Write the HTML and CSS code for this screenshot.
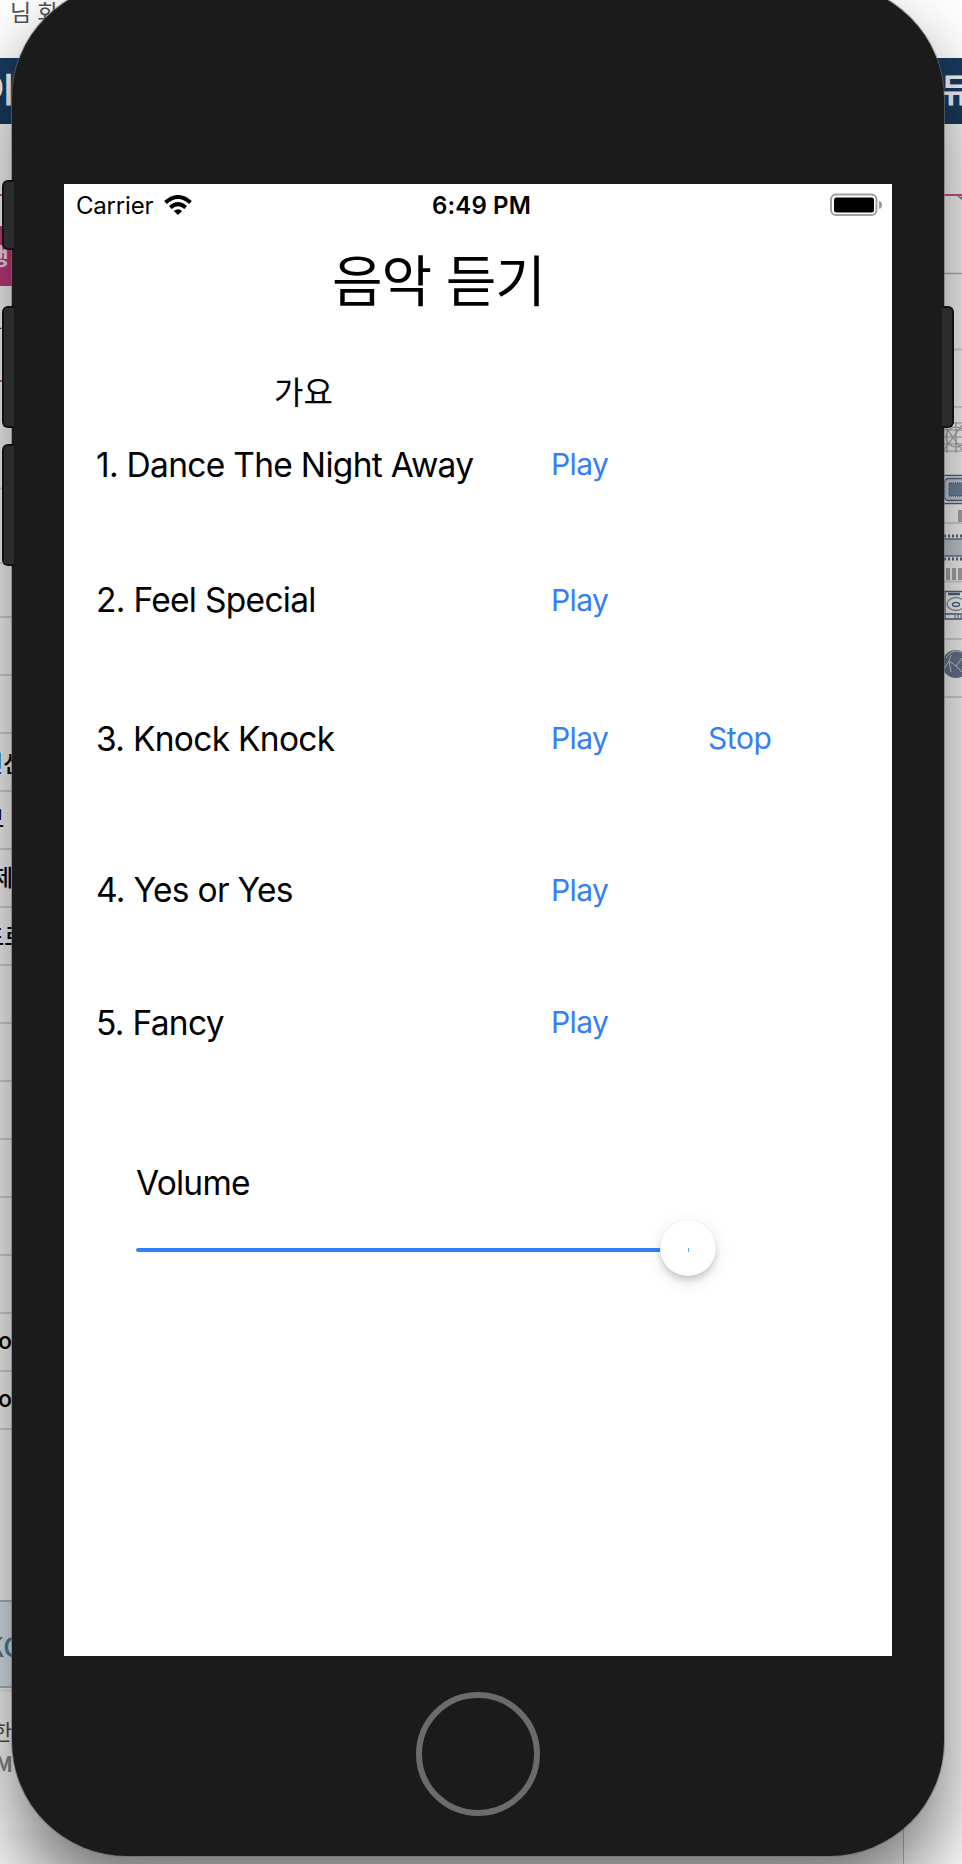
FILE: index.html
```html
<!DOCTYPE html>
<html lang="ko">
<head>
<meta charset="utf-8">
<title>음악 듣기</title>
<link rel="stylesheet" href="styles.css">
</head>
<body>
<div class="desktop">
  <svg class="backdrop" viewBox="0 0 962 1864" width="962" height="1864" aria-hidden="true">
    <rect width="962" height="1864" fill="#fff"/>
    <rect y="58" width="962" height="66" fill="#193a5f"/>
    <rect y="124" width="962" height="1740" fill="#fbfbfb"/>
    <g class="bd-text">
      <text x="10" y="21" font-size="23" fill="#555">님 화</text>
      <text x="-16" y="102" font-size="33" font-weight="700" fill="#f2f5f8">이</text>
      <text x="941" y="102" font-size="33" font-weight="700" fill="#f2f5f8">뮤</text>
    </g>
    <rect y="194" width="962" height="2" fill="#d84c8f"/>
    <rect y="226" width="12" height="60" fill="#c23a7e"/>
    <g class="bd-text">
      <text x="-13" y="265" font-size="24" font-weight="700" fill="#f3dbe8">행</text>
      <text x="-16" y="337" font-size="20" fill="#444">급</text>
    </g>
    <rect y="380" width="12" height="2" fill="#d84c8f"/>
    <path class="rule" d="M0 488.500H12M0 563H12M0 617H12M0 675H12M0 733H12M0 791H12M0 849H12M0 907H12M0 965H12M0 1023H12M0 1081H12M0 1139H12M0 1197H12M0 1255H12M0 1313H12M0 1371H12M0 1429H12"/>
    <g class="bd-text" font-size="23" font-weight="500">
      <text x="-18" y="772"><tspan fill="#0755c5">던</tspan>산</text>
      <text x="-17" y="827">보</text>
      <text x="-8" y="886">제</text>
      <text x="-17" y="945">드로</text>
      <text x="-2" y="1349">o</text>
      <text x="-2" y="1407">o</text>
    </g>
    <rect x="0" y="1601" width="12" height="86" fill="#dce9ef"/>
    <path d="M0 1601H12M0 1687H12" stroke="#a3bac2" stroke-width="2"/>
    <path d="M0 1690.500H12" stroke="#dce9ef" stroke-width="2"/>
    <g class="bd-text">
      <text x="-14" y="1657" font-size="27" font-weight="500" fill="#5d7c96">KO</text>
      <text x="-8" y="1740" font-size="22" fill="#555">한</text>
      <text x="-5" y="1772" font-size="21" font-weight="700" fill="#888">M</text>
    </g>
    <path class="rule-dark" d="M944 273.500H962"/>
    <path class="rule" d="M944 349.500H962M944 407H962M944 523H962M944 581.500H962M944 639H962M944 697H962"/>
    <path d="M957 196L962 200V197Z" fill="#777"/>
    <g class="mesh"><path d="M944 423H962M944 430H962M944 437H962M944 444H962M944 451H962M947 422V453M956 422V453M944 425L962 450M944 450L962 425"/><circle cx="956" cy="437" r="10"/></g>
    <g fill="none" stroke="#526684" stroke-width="1.300">
      <path d="M944 475.500H962M944 503.500H962"/>
      <rect x="944.500" y="478.500" width="28" height="22" rx="4" fill="#c6d0df"/>
      <rect x="949" y="483" width="22" height="13" fill="#7486a0" stroke-dasharray="1 1"/>
      <rect x="940" y="539" width="30" height="17" fill="#c7ccd5"/>
      <path d="M944 536H962M944 559H962" stroke-width="3" stroke-dasharray="2 2"/>
      <path d="M944 591.500H962M944 614H962M944 619H962M945 592V619"/>
      <path d="M948 594H960" stroke-width="2.500"/>
      <ellipse cx="956" cy="604" rx="9" ry="6.500" stroke="#8796aa"/><ellipse cx="956" cy="604.500" rx="3.500" ry="2"/>
      <path d="M955 615V619M958 615V619M961 615V619" stroke-width="1"/>
    </g>
    <path d="M958 510h4v12h-4zM946 568h4v12h-4zM952 568h4v12h-4zM958 568h4v12h-4z" fill="#aaa"/>
    <circle cx="956" cy="664" r="14" fill="#68778d"/>
    <path d="M944 669L949 661L956 666L962 658M951 655L949 661L951 672M956 666L962 672M946 658Q952 648 962 652" stroke="#ccd3dc" fill="none"/>
    <rect x="0" y="1830" width="904" height="34" fill="#f7f7f7"/>
    <path d="M903.500 1820V1864" stroke="#bbb"/>
  </svg>

  <div class="phone">
    <i class="key key-mute"></i><i class="key key-up"></i><i class="key key-down"></i><i class="key key-power"></i>
    <main class="screen">
      <header class="status">
        <div class="carrier"><span>Carrier</span>
          <svg class="wifi" viewBox="0 0 28 20" width="28" height="20"><g fill="none" stroke="#000" stroke-width="4"><path d="M1.500 7.600Q14-3.600 26.500 7.600"/><path d="M6.300 12.400Q14 5.700 21.700 12.400"/></g><path d="M9.800 16Q14 12.400 18.200 16L14 20Z"/></svg>
        </div>
        <time class="clock">6:49 PM</time>
        <svg class="battery" viewBox="0 0 52 24" width="52" height="24"><rect x="1" y="1.500" width="45.500" height="20.500" rx="5" fill="none" stroke="#a0a0a0" stroke-width="2"/><rect x="4" y="4.500" width="40" height="15" rx="2.500"/><path d="M49 8Q52 8.500 52 12T49 16Z" fill="#999"/></svg>
      </header>
      <h1 class="title">음악 듣기</h1>
      <h2 class="genre">가요</h2>
      <ol class="songs">
        <li class="song s1"><span class="name">1. Dance The Night Away</span><button class="play">Play</button></li>
        <li class="song s2"><span class="name">2. Feel Special</span><button class="play">Play</button></li>
        <li class="song s3"><span class="name">3. Knock Knock</span><button class="play">Play</button><button class="stop">Stop</button></li>
        <li class="song s4"><span class="name">4. Yes or Yes</span><button class="play">Play</button></li>
        <li class="song s5"><span class="name">5. Fancy</span><button class="play">Play</button></li>
      </ol>
      <section class="volume">
        <span class="volume-label">Volume</span>
        <div class="slider"><div class="track"></div><div class="thumb"><i class="tick"></i></div></div>
      </section>
    </main>
    <div class="home"></div>
  </div>
</div>
</body>
</html>
```
FILE: styles.css
```css
* { box-sizing: border-box; margin: 0; padding: 0; }
body { font-family: Inter, "Noto Sans CJK KR", sans-serif; color: #000; }
.desktop { display: flex; align-items: flex-start; position: relative; width: 962px; height: 1864px; overflow: hidden; background: #fff; }
.backdrop { position: absolute; left: 0; top: 0; }
.bd-text { font-family: "Noto Sans CJK KR", sans-serif; }
.rule { stroke: #d7d7dc; stroke-width: 2; }
.rule-dark { stroke: #b4b4b4; stroke-width: 1.5; }
.mesh { fill: none; stroke: #a5a5a5; stroke-width: 1.2; }

.phone {
  position: relative;
  width: 932px; height: 1872px;
  margin: -16px 0 0 12px;
  padding: 200px 52px 0;
  background: #1b1b1b;
  border-radius: 115px;
  box-shadow: 0 0 0 1px rgba(110, 110, 110, .6), 0 42px 76px rgba(0, 0, 0, .54);
}

/* hardware keys straddle the phone's edge */
.key { position: absolute; width: 12px; background: #2c2c2c; border: 2px solid #121212; }
.key-mute, .key-up, .key-down { left: -10px; border-right: 0; border-radius: 6px 0 0 6px; }
.key-mute { top: 196px; height: 70px; }
.key-up { top: 322px; height: 122px; }
.key-down { top: 460px; height: 122px; }
.key-power { right: -10px; top: 322px; height: 122px; border-left: 0; border-radius: 0 6px 6px 0; }

.screen { display: flex; flex-direction: column; width: 828px; height: 1472px; background: #fff; }
.status { display: grid; grid-template-columns: 1fr auto 1fr; align-items: center; height: 40px; padding: 0 10px 0 12px; }
.carrier { display: flex; align-items: center; gap: 11px; font-size: 24px; line-height: 40px; letter-spacing: -.2px; }
.carrier span, .clock { padding-top: 2px; }
.clock { margin-left: 5px; font-size: 24px; font-weight: 600; letter-spacing: .15px; line-height: 40px; }
.battery { justify-self: end; }
.title { margin: 16px 0 0 268px; font-size: 55px; font-weight: 400; line-height: 82px; letter-spacing: -1px; white-space: nowrap; }
.genre { margin: 51px 0 0 210px; font-size: 32px; font-weight: 400; line-height: 40px; }

.songs { list-style: none; padding-left: 32px; margin-top: 28px; }
.song { display: grid; grid-template-columns: 455px 157px auto; align-items: center; justify-content: start; height: 48px; }
.s2 { margin-top: 87px; }
.s3 { margin-top: 91px; }
.s4 { margin-top: 103px; }
.s5 { margin-top: 85px; }
.name { font-size: 33.5px; line-height: 48px; letter-spacing: -.7px; white-space: nowrap; }
button { border: 0; background: none; color: #347ff6; font: 400 30px/48px Inter, sans-serif; letter-spacing: -.6px; text-align: left; }
.s1 button, .s3 button, .s5 button { margin-top: -2px; }
.stop { letter-spacing: -.4px; }

.volume { margin: 112px 0 0 72px; }
.volume-label { display: block; font-size: 33.5px; line-height: 48px; letter-spacing: -.75px; }
.slider { display: flex; align-items: center; height: 56px; margin-top: 13px; }
.track { width: 525px; height: 4px; margin-top: 3px; border-radius: 2px; background: #347ff6; }
.thumb { display: flex; align-items: center; justify-content: center; width: 56px; height: 56px; margin-left: -1px; background: #fff; border-radius: 50%; box-shadow: 0 0 1px rgba(0, 0, 0, .12), 0 5px 6px rgba(0, 0, 0, .15), 0 5px 22px rgba(0, 0, 0, .09); }
.tick { width: 1px; height: 4px; margin-top: 4px; background: #5fa4ee; }
.home { width: 124px; height: 124px; margin: 36px auto 0; border: 6px solid #6b6b6b; border-radius: 50%; }
```
